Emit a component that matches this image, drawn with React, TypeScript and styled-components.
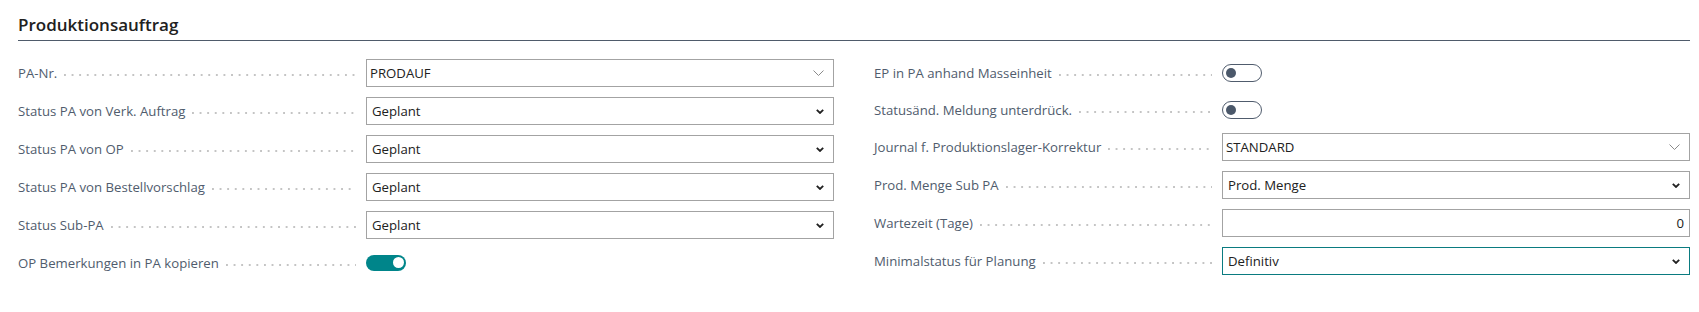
import React from 'react';
import styled, { createGlobalStyle, css } from 'styled-components';

const GlobalStyle = createGlobalStyle`
  html, body {
    margin: 0;
    padding: 0;
    background: #ffffff;
  }
  body {
    font-family: 'Segoe UI', 'Open Sans', sans-serif;
    -webkit-font-smoothing: antialiased;
  }
`;

type Field =
  | { kind: 'lookup'; label: string; value: string }
  | { kind: 'select'; label: string; value: string; focused?: boolean }
  | { kind: 'number'; label: string; value: string }
  | { kind: 'toggle'; label: string; on: boolean };

const leftFields: Field[] = [
  { kind: 'lookup', label: 'PA-Nr.', value: 'PRODAUF' },
  { kind: 'select', label: 'Status PA von Verk. Auftrag', value: 'Geplant' },
  { kind: 'select', label: 'Status PA von OP', value: 'Geplant' },
  { kind: 'select', label: 'Status PA von Bestellvorschlag', value: 'Geplant' },
  { kind: 'select', label: 'Status Sub-PA', value: 'Geplant' },
  { kind: 'toggle', label: 'OP Bemerkungen in PA kopieren', on: true },
];

const rightFields: Field[] = [
  { kind: 'toggle', label: 'EP in PA anhand Masseinheit', on: false },
  { kind: 'toggle', label: 'Statusänd. Meldung unterdrück.', on: false },
  { kind: 'lookup', label: 'Journal f. Produktionslager-Korrektur', value: 'STANDARD' },
  { kind: 'select', label: 'Prod. Menge Sub PA', value: 'Prod. Menge' },
  { kind: 'number', label: 'Wartezeit (Tage)', value: '0' },
  { kind: 'select', label: 'Minimalstatus für Planung', value: 'Definitiv', focused: true },
];

const LookupChevron = () => (
  <svg width="11" height="6" viewBox="0 0 11 6">
    <polyline points="0.5,0.5 5.5,5.5 10.5,0.5" fill="none" stroke="#8a8a8a" strokeWidth="1" />
  </svg>
);

const SelectChevron = () => (
  <svg width="8" height="5" viewBox="0 0 8 5">
    <polyline points="0.8,0.8 4,4 7.2,0.8" fill="none" stroke="#212121" strokeWidth="1.8" />
  </svg>
);

const FieldControl: React.FC<{ field: Field }> = ({ field }) => {
  switch (field.kind) {
    case 'toggle':
      return (
        <Toggle $on={field.on}>
          <Knob $on={field.on} />
        </Toggle>
      );
    case 'lookup':
      return (
        <Box>
          <Value $pad={3}>{field.value}</Value>
          <ChevronSlot>
            <LookupChevron />
          </ChevronSlot>
        </Box>
      );
    case 'select':
      return (
        <Box $focused={field.focused}>
          <Value $pad={5}>{field.value}</Value>
          <ChevronSlot>
            <SelectChevron />
          </ChevronSlot>
        </Box>
      );
    case 'number':
      return (
        <Box>
          <Value $pad={5} $right>
            {field.value}
          </Value>
        </Box>
      );
  }
};

const FieldColumn: React.FC<{ fields: Field[] }> = ({ fields }) => (
  <Column>
    {fields.map((f) => (
      <Row key={f.label} $compact={f.kind === 'toggle'}>
        <LabelCell>
          <Label>{f.label}</Label>
          <Leader />
        </LabelCell>
        <ControlCell>
          <FieldControl field={f} />
        </ControlCell>
      </Row>
    ))}
  </Column>
);

export default function App() {
  return (
    <>
      <GlobalStyle />
      <Page>
        <Header>Produktionsauftrag</Header>
        <Columns>
          <FieldColumn fields={leftFields} />
          <FieldColumn fields={rightFields} />
        </Columns>
      </Page>
    </>
  );
}

const Page = styled.div`
  box-sizing: border-box;
  width: 1699px;
  min-height: 312px;
  padding: 0 9px 0 18px;
  background: #ffffff;
`;

const Header = styled.h2`
  margin: 0;
  padding: 13px 0 3px;
  font-family: 'Segoe UI', 'Open Sans', sans-serif;
  font-size: 17px;
  font-weight: 600;
  line-height: 24px;
  color: #212121;
  border-bottom: 1px solid #4f5b6b;
`;

const Columns = styled.div`
  display: grid;
  grid-template-columns: 1fr 1fr;
  column-gap: 40px;
  margin-top: 13px;
`;

const Column = styled.div`
  display: flex;
  flex-direction: column;
`;

const Row = styled.div<{ $compact?: boolean }>`
  display: grid;
  grid-template-columns: 348px 1fr;
  align-items: center;
  height: ${({ $compact }) => ($compact ? 37 : 38)}px;
`;

const LabelCell = styled.div`
  display: flex;
  align-items: center;
  min-width: 0;
  padding-right: 10px;
`;

const Label = styled.span`
  font-size: 13.2px;
  line-height: 20px;
  color: #505c6d;
  white-space: nowrap;
`;

const Leader = styled.span`
  flex: 1;
  height: 2px;
  margin: 4px 0 0 7px;
  background-image: radial-gradient(circle 1px at 1px 1px, #c4c4c4 95%, transparent 100%);
  background-size: 7.6px 2px;
  background-repeat: repeat-x;
`;

const ControlCell = styled.div`
  display: flex;
  align-items: center;
`;

const Box = styled.div<{ $focused?: boolean }>`
  box-sizing: border-box;
  display: flex;
  align-items: center;
  width: 100%;
  height: 28px;
  border: 1px solid #a3a3a3;
  background: #ffffff;
  ${({ $focused }) =>
    $focused &&
    css`
      border-color: #0a7b80;
    `}
`;

const Value = styled.span<{ $pad: number; $right?: boolean }>`
  flex: 1;
  padding: 0 ${({ $right }) => ($right ? 5 : 0)}px 0 ${({ $pad }) => $pad}px;
  font-size: 13.2px;
  line-height: 20px;
  color: #212121;
  text-align: ${({ $right }) => ($right ? 'right' : 'left')};
  white-space: nowrap;
`;

const ChevronSlot = styled.span`
  display: flex;
  align-items: center;
  margin-right: 9px;
`;

const Toggle = styled.span<{ $on: boolean }>`
  box-sizing: border-box;
  display: flex;
  align-items: center;
  width: 40px;
  border-radius: 10px;
  ${({ $on }) =>
    $on
      ? css`
          height: 16px;
          justify-content: flex-end;
          padding: 0 2px;
          background: #00858a;
        `
      : css`
          height: 18px;
          justify-content: flex-start;
          padding: 0 3px;
          border: 1px solid #505c6d;
          background: #ffffff;
        `}
`;

const Knob = styled.span<{ $on: boolean }>`
  display: block;
  border-radius: 50%;
  width: ${({ $on }) => ($on ? 11 : 10)}px;
  height: ${({ $on }) => ($on ? 11 : 10)}px;
  background: ${({ $on }) => ($on ? '#ffffff' : '#4b586a')};
`;
